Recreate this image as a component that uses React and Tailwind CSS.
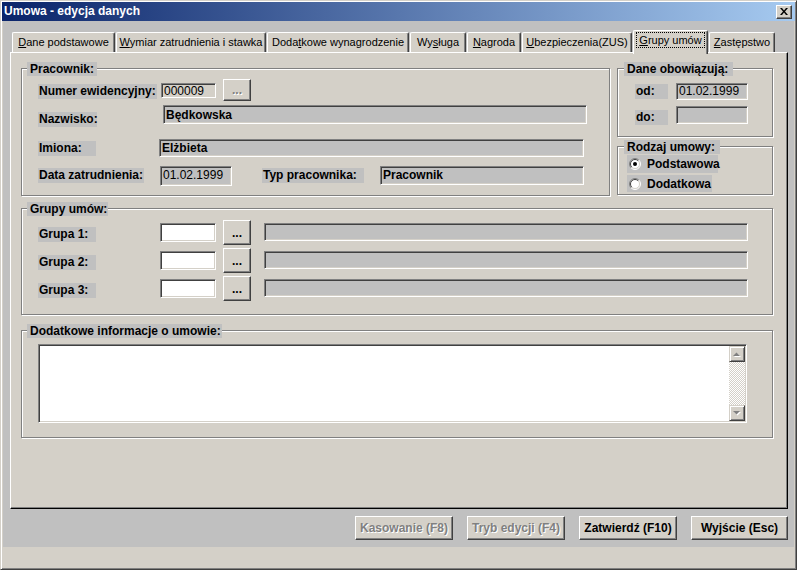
const font = "font-['Liberation_Sans',Arial,sans-serif]";

const sunken =
  "border border-t-[#808080] border-l-[#808080] border-b-white border-r-white shadow-[inset_1px_1px_0_#404040,inset_-1px_-1px_0_#d4d0c8]";
const raised =
  "border border-t-white border-l-white border-b-[#404040] border-r-[#404040] shadow-[inset_-1px_-1px_0_#808080] bg-[#d4d0c8]";
const disabledText = "text-[#808080] [text-shadow:1px_1px_0_#fff]";

function Group({ title, titleW, className, children }) {
  return (
    <div
      className={
        "relative border border-[#808080] shadow-[inset_1px_1px_0_#fff,1px_1px_0_#fff] " +
        className
      }
    >
      <span
        className={
          "absolute -top-[7px] left-[5px] h-[14px] bg-[#c0c0c0] pl-[3px] text-[12px] leading-[14px] font-bold whitespace-nowrap " +
          titleW
        }
      >
        {title}
      </span>
      {children}
    </div>
  );
}

function Label({ className, children }) {
  return (
    <div
      className={
        "shrink-0 h-[15px] bg-[#c0c0c0] pl-[1px] text-[12px] leading-[14px] font-bold whitespace-nowrap " +
        className
      }
    >
      {children}
    </div>
  );
}

function Field({ className, children }) {
  return (
    <div
      className={
        "shrink-0 pl-[2px] text-[12px] leading-[14px] whitespace-nowrap overflow-hidden " +
        sunken +
        " " +
        className
      }
    >
      {children}
    </div>
  );
}

function DotsButton({ disabled, className }) {
  return (
    <div
      className={
        "shrink-0 w-[28px] flex items-center justify-center text-[12px] leading-[14px] font-bold " +
        raised +
        " " +
        (disabled ? disabledText + " " : "") +
        className
      }
    >
      ...
    </div>
  );
}

function Radio({ checked }) {
  return (
    <svg width="12" height="12" viewBox="0 0 12 12" className="shrink-0">
      <circle cx="6" cy="6" r="5" fill="#fff" />
      <path d="M2.11 9.89 A5.5 5.5 0 0 1 9.89 2.11" fill="none" stroke="#808080" />
      <path d="M9.89 2.11 A5.5 5.5 0 0 1 2.11 9.89" fill="none" stroke="#fff" />
      <path d="M2.8 9.2 A4.5 4.5 0 0 1 9.2 2.8" fill="none" stroke="#404040" />
      <path d="M9.2 2.8 A4.5 4.5 0 0 1 2.8 9.2" fill="none" stroke="#d4d0c8" />
      {checked && <circle cx="6" cy="6" r="2" fill="#000" />}
    </svg>
  );
}

function Tab({ w, children }) {
  return (
    <div
      className={
        "h-[20px] bg-[#d4d0c8] border-t border-l border-r border-t-white border-l-white border-r-[#404040] shadow-[inset_-1px_0_0_#808080] rounded-t-[2px] flex justify-center pt-[3px] text-[11px] leading-[13px] whitespace-nowrap " +
        w
      }
    >
      {children}
    </div>
  );
}

function ScrollBtn({ up }) {
  return (
    <div className="w-[16px] h-[16px] shrink-0 bg-[#d4d0c8] border border-t-[#d4d0c8] border-l-[#d4d0c8] border-b-[#404040] border-r-[#404040] shadow-[inset_1px_1px_0_#fff,inset_-1px_-1px_0_#808080] flex items-center justify-center">
      <svg width="8" height="5" viewBox="0 0 8 5">
        {up ? (
          <>
            <polygon points="1,5 8,5 4.5,1.5" fill="#fff" />
            <polygon points="0,4 7,4 3.5,0.5" fill="#808080" />
          </>
        ) : (
          <>
            <polygon points="1,1 8,1 4.5,4.5" fill="#fff" />
            <polygon points="0,0 7,0 3.5,3.5" fill="#808080" />
          </>
        )}
      </svg>
    </div>
  );
}

function BottomButton({ w, disabled, children }) {
  return (
    <div
      className={
        "h-[24px] flex items-center justify-center text-[12px] font-bold whitespace-nowrap " +
        raised +
        " " +
        (disabled ? disabledText + " " : "") +
        w
      }
    >
      {children}
    </div>
  );
}

export default function App() {
  return (
    <div
      className={
        "w-[797px] h-[570px] bg-[#d4d0c8] text-black flex flex-col p-[1px] border border-t-[#d4d0c8] border-l-[#d4d0c8] border-r-[#404040] border-b-[#404040] shadow-[inset_1px_1px_0_#fff,inset_-1px_-1px_0_#808080] " +
        font
      }
    >
      {/* title bar */}
      <div className="h-[19px] shrink-0 flex items-center justify-between pl-[2px] pr-[3px] bg-[linear-gradient(to_right,#0a246a,#a6caf0)]">
        <span className="text-white text-[12px] font-bold leading-[19px]">
          Umowa - edycja danych
        </span>
        <div className="w-[16px] h-[14px] flex items-center justify-center bg-[#d4d0c8] border border-t-white border-l-white border-b-[#404040] border-r-[#404040] shadow-[inset_-1px_-1px_0_#808080]">
          <svg width="8" height="7" viewBox="0 0 8 7">
            <path d="M0 0h2l2 2.5L6 0h2L5 3.5 8 7H6L4 4.5 2 7H0l3-3.5z" fill="#000" />
          </svg>
        </div>
      </div>

      {/* client */}
      <div className="h-[526px] shrink-0 mx-[1px] bg-[#c0c0c0] flex flex-col pt-[9px]">
        {/* tabs */}
        <div className="flex items-end gap-[1px] ml-[9px]">
          <Tab w="w-[103px]"><span><u>D</u>ane podstawowe</span></Tab>
          <Tab w="w-[150px]"><span><u>W</u>ymiar zatrudnienia i stawka</span></Tab>
          <Tab w="w-[142px]"><span>Doda<u>t</u>kowe wynagrodzenie</span></Tab>
          <Tab w="w-[56px]"><span>Wy<u>s</u>ługa</span></Tab>
          <Tab w="w-[54px]"><span><u>N</u>agroda</span></Tab>
          <Tab w="w-[110px]"><span><u>U</u>bezpieczenia(ZUS)</span></Tab>
          <div className="relative z-10 -mb-[2px] w-[75px] h-[24px] bg-[#d4d0c8] border-t border-l border-r border-t-white border-l-white border-r-[#404040] shadow-[inset_-1px_0_0_#808080] rounded-t-[2px] flex justify-center pt-[1px] text-[11px] leading-[14px] whitespace-nowrap">
            <span className="border border-dotted border-black px-[2px] h-[16px]">
              <u>G</u>rupy umów
            </span>
          </div>
          <Tab w="w-[66px]"><span><u>Z</u>astępstwo</span></Tab>
        </div>

        {/* page panel */}
        <div className="ml-[7px] w-[778px] h-[457px] shrink-0 bg-[#d4d0c8] border border-t-white border-l-white border-r-black border-b-black shadow-[inset_-1px_-1px_0_#808080] pt-[15px] pl-[10px]">
          <div className="flex gap-[7px]">
            <Group title="Pracownik:" titleW="w-[70px]" className="w-[589px] h-[128px] shrink-0">
              <div className="pl-[16px] pt-[10px] flex flex-col">
                <div className="flex h-[24px]">
                  <Label className="w-[119px] mt-[5px] h-[14px]">Numer ewidencyjny:</Label>
                  <Field className="w-[55px] h-[15px] ml-[4px] mt-[4px] leading-[12px]">000009</Field>
                  <DotsButton disabled className="ml-[7px] h-[22px]" />
                </div>
                <div className="flex mt-[2px] h-[22px]">
                  <Label className="w-[59px] mt-[7px]">Nazwisko:</Label>
                  <Field className="w-[424px] h-[19px] ml-[66px] pt-[2px] font-bold bg-[#c0c0c0]">Będkowska</Field>
                </div>
                <div className="flex mt-[12px] h-[18px]">
                  <Label className="w-[58px] mt-[2px] h-[14px]">Imiona:</Label>
                  <Field className="w-[425px] h-[18px] ml-[63px] pt-[1px] font-bold bg-[#c0c0c0]">Elżbieta</Field>
                </div>
                <div className="flex mt-[9px] h-[20px]">
                  <Label className="w-[106px] mt-[2px]">Data zatrudnienia:</Label>
                  <Field className="w-[72px] h-[20px] ml-[16px] pt-[1px] bg-[#c0c0c0]">01.02.1999</Field>
                  <Label className="w-[102px] ml-[30px] mt-[2px] h-[14px]">Typ pracownika:</Label>
                  <Field className="w-[204px] h-[19px] ml-[16px] pt-[1px] font-bold bg-[#c0c0c0]">Pracownik</Field>
                </div>
              </div>
            </Group>

            <div className="flex flex-col w-[156px]">
              <Group title="Dane obowiązują:" titleW="w-[109px] left-[6px]" className="h-[69px]">
                <div className="pl-[17px] pt-[14px] flex flex-col">
                  <div className="flex">
                    <Label className="w-[33px] mt-[1px] h-[14px]">od:</Label>
                    <Field className="w-[72px] h-[17px] ml-[8px] bg-[#c0c0c0]">01.02.1999</Field>
                  </div>
                  <div className="flex mt-[6px]">
                    <Label className="w-[33px] mt-[4px] h-[13px] leading-[13px]">do:</Label>
                    <Field className="w-[72px] h-[18px] ml-[8px] bg-[#c0c0c0]" />
                  </div>
                </div>
              </Group>
              <Group title="Rodzaj umowy:" titleW="w-[96px] left-[6px] h-[13px] leading-[13px]" className="h-[49px] mt-[9px]">
                <div className="pl-[9px] pt-[8px] flex flex-col gap-[2px]">
                  <div className="w-[91px] h-[18px] bg-[#c0c0c0] flex items-center pl-[2px] gap-[6px] text-[12px] font-bold">
                    <Radio checked />
                    <span>Podstawowa</span>
                  </div>
                  <div className="w-[85px] h-[17px] bg-[#c0c0c0] flex items-center pl-[2px] gap-[6px] text-[12px] font-bold">
                    <Radio />
                    <span>Dodatkowa</span>
                  </div>
                </div>
              </Group>
            </div>
          </div>

          <Group title="Grupy umów:" titleW="w-[81px]" className="w-[752px] h-[107px] mt-[12px]">
            <div className="pl-[16px] pt-[11px] flex flex-col gap-[3px]">
              {[1, 2, 3].map((n) => (
                <div key={n} className="flex h-[25px]">
                  <Label className="w-[58px] mt-[7px] h-[12px] leading-[12px]">Grupa {n}:</Label>
                  <Field className="w-[56px] h-[19px] ml-[64px] mt-[3px] bg-white" />
                  <DotsButton className="ml-[7px] h-[25px]" />
                  <Field className="w-[484px] h-[18px] ml-[13px] mt-[3px] bg-[#c0c0c0]" />
                </div>
              ))}
            </div>
          </Group>

          <Group title="Dodatkowe informacje o umowie:" titleW="w-[195px]" className="w-[752px] h-[108px] mt-[15px]">
            <div className="pl-[16px] pt-[13px]">
              <div className={"w-[709px] h-[79px] bg-white p-[1px] flex justify-end " + sunken}>
                <div className="w-[16px] flex flex-col bg-[repeating-conic-gradient(#fff_0_25%,#d4d0c8_0_50%)] bg-[length:2px_2px]">
                  <ScrollBtn up />
                  <div className="flex-1" />
                  <ScrollBtn />
                </div>
              </div>
            </div>
          </Group>
        </div>

        {/* buttons */}
        <div className="flex gap-[14px] ml-[352px] mt-[7px]">
          <BottomButton w="w-[98px]" disabled>Kasowanie (F8)</BottomButton>
          <BottomButton w="w-[98px]" disabled>Tryb edycji (F4)</BottomButton>
          <BottomButton w="w-[98px]">Zatwierdź (F10)</BottomButton>
          <BottomButton w="w-[97px]">Wyjście (Esc)</BottomButton>
        </div>
      </div>

      {/* status strip */}
      <div className="h-[21px] shrink-0 bg-[#d4d0c8]" />
    </div>
  );
}
